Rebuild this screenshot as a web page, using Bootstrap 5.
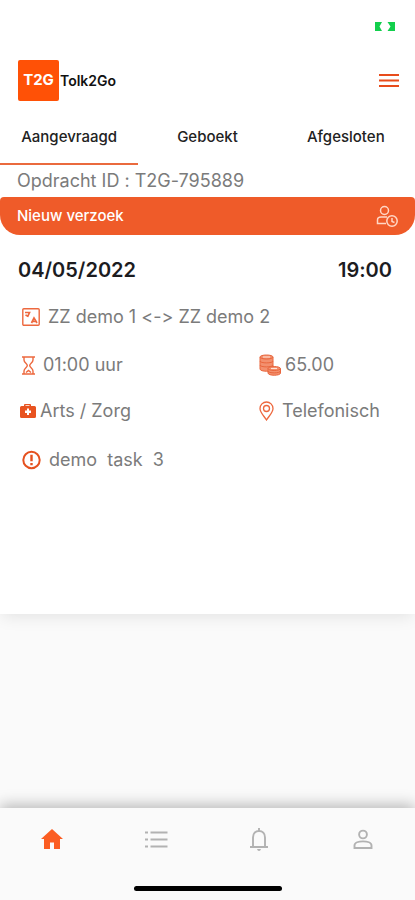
<!DOCTYPE html>
<html lang="nl">
<head>
<meta charset="utf-8">
<meta name="viewport" content="width=device-width, initial-scale=1">
<title>Tolk2Go</title>
<link href="https://cdn.jsdelivr.net/npm/bootstrap@5.3.0/dist/css/bootstrap.min.css" rel="stylesheet">
<style>
:root { --brand: #ef5b29; }
body { font-family: Inter, "Liberation Sans", sans-serif; background: #fafafa; color: #1c1c1f; font-variant-ligatures: none; }
svg { display: block; flex: none; }
.status-row { height: 60px; padding: 22px 20px 0; }
.brand-row { height: 41px; padding: 0 16px 0 18px; }
.brand-logo { width: 41px; height: 41px; background: #ff5106; border-radius: 2px; color: #fff; font-size: 15px; font-weight: 700; }
.brand-name { font-size: 14px; font-weight: 600; color: #111; margin-left: 1px; }
.tab-row { height: 64px; padding-top: 9px; }
.tab-row .nav-link { color: #222; font-size: 15px; font-weight: 500; padding: 2px 0 0; border-bottom: 2px solid transparent; border-radius: 0; height: 55px; }
.tab-row .nav-link.active { border-color: #ea6a3e; }
.order-id { height: 32px; line-height: 32px; padding-left: 17px; font-size: 18px; color: #7b7b7b; }
.request-bar { height: 38px; padding: 0 16px 0 17px; background: var(--brand); color: #fff; font-size: 15px; font-weight: 500; border-radius: 4px 4px 20px 20px; }
.request { background: #fff; box-shadow: 0 4px 16px -2px rgba(0,0,0,.1); min-height: 614px; }
.when { font-size: 20px; font-weight: 600; line-height: 30px; padding: 20px 23px 0 18px; }
.info { padding: 18px 18px 0; color: #7b7b7b; font-size: 18px; line-height: 28px; }
.info .first { margin-bottom: 20px; }
.info .pair { margin-bottom: 18px; }
.info .side { width: 138px; }
.info .last { margin-top: 21px; }
.bottom-bar { background: #fafafa; height: 92px; box-shadow: 0 -3px 14px rgba(0,0,0,.27); }
.bottom-bar .nav-link { padding: 18px 0 0; height: 62px; color: #b2b2b2; }
.bottom-bar .nav-link.active { color: #fb5d22; }
.home-line { width: 148px; height: 5px; background: #000; margin-top: 16px; }
</style>
</head>
<body class="min-vh-100 d-flex flex-column">
<main class="request">
  <div class="status-row d-flex justify-content-end">
    <svg width="20" height="9" viewBox="0 0 20 9" fill="#12cf4c" aria-hidden="true"><path d="M0 0h7L4.500 4.500 7 9H0zM12.500 0H20v9h-7.500L15.500 4.500z"/></svg>
  </div>
  <header class="brand-row d-flex align-items-center">
    <div class="brand-logo d-flex align-items-center justify-content-center">T2G</div>
    <span class="brand-name">Tolk2Go</span>
    <button type="button" class="btn border-0 p-0 ms-auto" aria-label="Menu">
      <svg width="20" height="16" viewBox="0 0 20 16" fill="none" stroke="#e84c1b" stroke-width="2"><path d="M0 2h20M0 7.500h20M0 13h20"/></svg>
    </button>
  </header>
  <nav class="tab-row nav nav-fill flex-nowrap" aria-label="Opdrachten">
    <a href="#" class="nav-link col-4 active d-flex align-items-center justify-content-center" aria-current="page">Aangevraagd</a>
    <a href="#" class="nav-link col-4 d-flex align-items-center justify-content-center">Geboekt</a>
    <a href="#" class="nav-link col-4 d-flex align-items-center justify-content-center">Afgesloten</a>
  </nav>
  <div class="order-id">Opdracht ID : T2G-795889</div>
  <div class="request-bar d-flex align-items-center justify-content-between">
    <span>Nieuw verzoek</span>
    <svg width="23" height="23" viewBox="0 0 23 23" fill="none" stroke="#ffd7c6" stroke-width="1.500"><circle cx="8.500" cy="5.500" r="4"/><path d="M10 18.500H1.500V15q0-3 3.500-3h6"/><circle cx="16" cy="16" r="5.200"/><path d="M16 13v3.500l2.500 1"/></svg>
  </div>
  <div class="when d-flex justify-content-between"><span>04/05/2022</span><span>19:00</span></div>
  <div class="info">
    <div class="first d-flex align-items-center">
      <svg class="ms-1 me-2" width="18" height="18" viewBox="0 0 18 18" fill="none" stroke="#ed683e" stroke-width="1.400"><rect x=".8" y=".8" width="16.400" height="16.400" rx="1"/><path d="M3 4.500h4.500L5.500 9M3.500 7l3 1.500M9.500 15l2.500-5 3 5M10.500 13.500h3.500" stroke-width="1.700"/></svg>
      <span>ZZ demo 1 &lt;-&gt; ZZ demo 2</span>
    </div>
    <div class="pair d-flex">
      <div class="d-flex align-items-center flex-grow-1">
        <svg class="ms-1 me-2" width="13" height="19" viewBox="0 0 13 19" fill="none" stroke="#ed683e" stroke-width="1.400"><path d="M0 1h13M0 18h13M2 1v3c0 3 3.300 3.500 3.300 5.500S2 12 2 15v3M11 1v3c0 3-3.300 3.500-3.300 5.500S11 12 11 15v3M4 16.500l2.500-2 2.500 2"/></svg>
        <span>01:00 uur</span>
      </div>
      <div class="side d-flex align-items-center">
        <svg class="me-1" width="22" height="22" viewBox="0 0 22 22" fill="#f3906e" stroke="#e9663d"><path d="M1 3v12c0 3 13 3 13 0V3"/><ellipse cx="7.500" cy="3" rx="6.500" ry="2"/><path d="M1 7c0 2.500 13 2.500 13 0M1 11c0 2.500 13 2.500 13 0" fill="none"/><path d="M9 14.500v4.500c0 3 12.500 3 12.500 0v-4.500"/><ellipse cx="15.200" cy="14.500" rx="6.200" ry="2"/><path d="M9 17c0 2.500 12.500 2.500 12.500 0" fill="none"/><path d="M4 3h7M12 14.500h6" stroke="#ffe4d8"/></svg>
        <span>65.00</span>
      </div>
    </div>
    <div class="d-flex">
      <div class="d-flex align-items-center flex-grow-1">
        <svg class="me-1" width="18" height="14" viewBox="0 0 18 14"><path fill="#e85320" fill-rule="evenodd" d="M6 2V1q0-1 1-1h5q1 0 1 1v1h3.500Q18 2 18 3.500v9q0 1.500-1.500 1.500h-13Q2 14 2 12.500v-9Q2 2 3.500 2zM7.500 1.300V2h4v-.7zM9 4.500v2H7v2.500h2v2h2V9h2V6.500h-2v-2z"/></svg>
        <span>Arts / Zorg</span>
      </div>
      <div class="side d-flex align-items-center">
        <svg class="me-2" width="15" height="20" viewBox="0 0 15 20" fill="none" stroke="#ed683e" stroke-width="1.300"><path d="M7.500 19C5 15 1 11.500 1 7.500a6.500 6.500 0 0 1 13 0c0 4-4 7.500-6.500 11.500z"/><circle cx="7.500" cy="7.500" r="3"/></svg>
        <span>Telefonisch</span>
      </div>
    </div>
    <div class="last d-flex align-items-center">
      <svg class="ms-1 me-2" width="19" height="20" viewBox="0 0 19 20" fill="none" stroke="#e5511f" stroke-width="2"><circle cx="9.500" cy="10" r="8.200"/><path d="M9.500 4.800v6.400M9.500 13v2.200" stroke-width="2.400"/></svg>
      <span>demo&nbsp; task&nbsp; 3</span>
    </div>
  </div>
</main>
<footer class="bottom-bar mt-auto">
  <nav class="nav nav-fill flex-nowrap" aria-label="Hoofdmenu">
    <a href="#" class="nav-link col-3 active d-flex justify-content-center" aria-label="Home" aria-current="page"><svg width="26" height="26" viewBox="0 0 26 26" fill="currentColor"><path d="M13 3l11 10h-3v10h-6v-6.500h-4V23H5V13H2z"/></svg></a>
    <a href="#" class="nav-link col-3 d-flex justify-content-center" aria-label="Lijst"><svg width="26" height="26" viewBox="0 0 26 26" fill="none" stroke="currentColor" stroke-width="1.800"><path d="M2 6.500h3M7.500 6.500h17M2 13.500h3M7.500 13.500h17M2 20.500h3M7.500 20.500h17"/></svg></a>
    <a href="#" class="nav-link col-3 d-flex justify-content-center" aria-label="Meldingen"><svg width="26" height="26" viewBox="0 0 26 26" fill="none" stroke="currentColor" stroke-width="1.900"><path d="M4 21h18M7 21V11.500C7 7.500 9.500 5 13 5s6 2.500 6 6.500V21M13 5V2"/><path d="M11 23h4q-.5 2-2 2t-2-2z" fill="currentColor" stroke="none"/></svg></a>
    <a href="#" class="nav-link col-3 d-flex justify-content-center" aria-label="Profiel"><svg width="26" height="26" viewBox="0 0 26 26" fill="none" stroke="currentColor" stroke-width="1.900"><circle cx="13" cy="8.500" r="3.900"/><path d="M4.500 22v-2.500c0-5.500 17-5.500 17 0V22z"/></svg></a>
  </nav>
  <div class="home-line rounded-pill mx-auto"></div>
</footer>
<script src="https://cdn.jsdelivr.net/npm/bootstrap@5.3.0/dist/js/bootstrap.bundle.min.js"></script>
</body>
</html>
